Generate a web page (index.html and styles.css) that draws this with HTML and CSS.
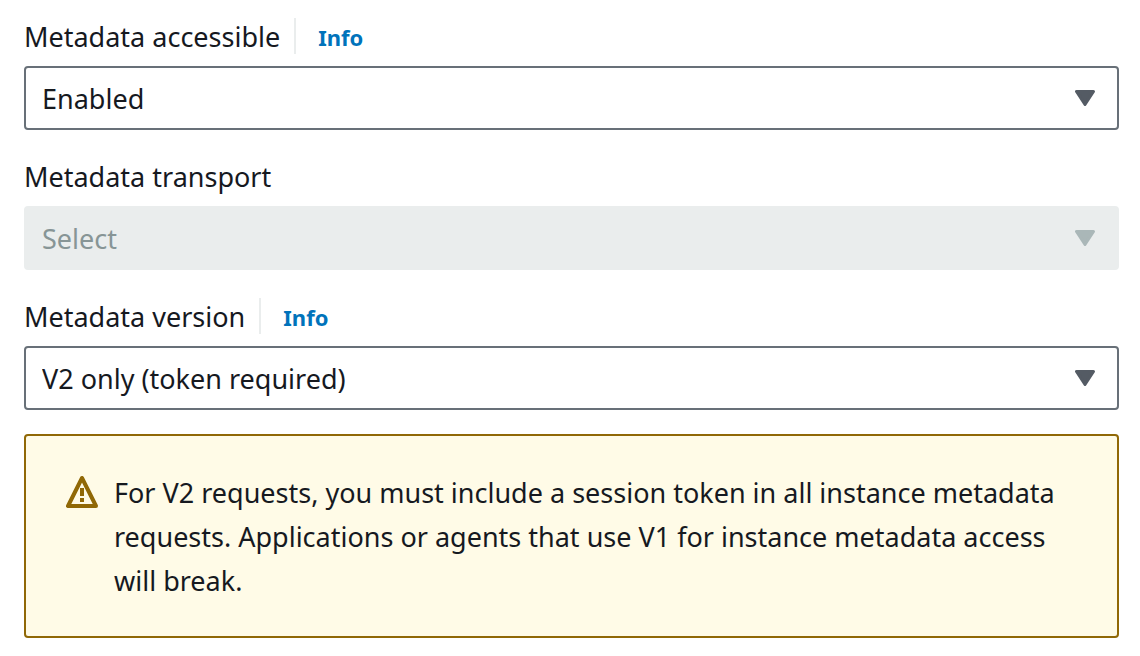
FILE: index.html
```html
<!DOCTYPE html>
<html lang="en">
<head>
<meta charset="utf-8">
<title>Metadata options</title>
<link rel="stylesheet" href="styles.css">
</head>
<body>
<form class="options">
  <div class="field">
    <div class="field-header">
      <label for="accessible">Metadata accessible</label>
      <a class="info" href="#accessible-help">Info</a>
    </div>
    <div class="select-wrap">
      <select class="select" id="accessible"><option>Enabled</option><option>Disabled</option></select>
      <svg class="caret" viewBox="0 0 20 16" aria-hidden="true"><path d="M1.5 1.5h17L10 14.5z"/></svg>
    </div>
  </div>
  <div class="field">
    <div class="field-header">
      <label for="transport">Metadata transport</label>
    </div>
    <div class="select-wrap">
      <select class="select" id="transport" disabled><option>Select</option></select>
      <svg class="caret" viewBox="0 0 20 16" aria-hidden="true"><path d="M1.5 1.5h17L10 14.5z"/></svg>
    </div>
  </div>
  <div class="field">
    <div class="field-header">
      <label for="version">Metadata version</label>
      <a class="info" href="#version-help">Info</a>
    </div>
    <div class="select-wrap">
      <select class="select" id="version"><option>V2 only (token required)</option><option>V1 and V2 (token optional)</option></select>
      <svg class="caret" viewBox="0 0 20 16" aria-hidden="true"><path d="M1.5 1.5h17L10 14.5z"/></svg>
    </div>
  </div>
  <div class="alert" role="alert">
    <svg class="alert-icon" viewBox="0 0 32 32" aria-hidden="true">
      <path class="alert-outline" d="M16 2 2 30h28z"/>
      <path class="alert-mark" d="M14 12h4v8h-4zM14 22h4v4h-4z"/>
    </svg>
    <p class="alert-text">For V2 requests, you must include a session token in all instance metadata requests. Applications or agents that use V1 for instance metadata access will break.</p>
  </div>
</form>
</body>
</html>
```
FILE: styles.css
```css
* {
  box-sizing: border-box;
}

body {
  margin: 0;
  background: #fff;
  color: #16191f;
  font: 27px/38px "Noto Sans", sans-serif;
}

.options {
  display: flex;
  flex-direction: column;
  padding: 18px 21px 18px 24px;
}

.field {
  display: flex;
  flex-direction: column;
  gap: 12px;
  margin-bottom: 28px;
}

.field:nth-of-type(3) {
  margin-bottom: 24px;
}

.field-header {
  display: flex;
  gap: 14px;
  height: 36px;
}

.info {
  padding-left: 22px;
  border-left: 2px solid #eaeded;
  color: #0073bb;
  font-size: 22px;
  font-weight: 700;
  text-decoration: none;
}

.select-wrap {
  display: grid;
  align-items: center;
}

.select {
  grid-area: 1 / 1;
  width: 100%;
  height: 64px;
  padding: 2px 60px 0 16px;
  appearance: none;
  border: 2px solid #687078;
  border-radius: 4px;
  background: #fff;
  color: #16191f;
  font: inherit;
}

.select:disabled {
  border-color: #eaeded;
  background: #eaeded;
  color: #879596;
  opacity: 1;
}

.caret {
  grid-area: 1 / 1;
  justify-self: end;
  width: 20px;
  height: 16px;
  margin-right: 24px;
  fill: #545b64;
  stroke: #545b64;
  stroke-width: 3;
  stroke-linejoin: round;
  pointer-events: none;
}

.select:disabled + .caret {
  fill: #aab7b8;
  stroke: #aab7b8;
}

.alert {
  display: flex;
  align-items: flex-start;
  gap: 16px;
  padding: 35px 40px 33px;
  border: 2px solid #906806;
  border-radius: 4px;
  background: #fffbe7;
}

.alert-icon {
  flex: none;
  width: 32px;
  height: 32px;
  margin-top: 5px;
}

.alert-outline {
  fill: none;
  stroke: #906806;
  stroke-width: 4;
  stroke-linejoin: round;
}

.alert-mark {
  fill: #906806;
}

.alert-text {
  margin: 0;
  line-height: 44px;
}
```
